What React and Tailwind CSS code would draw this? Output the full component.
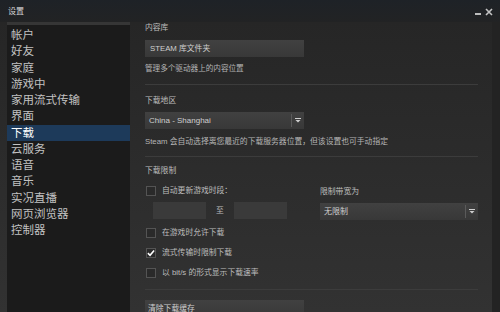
import React from "react"

const navItems = [
    "帐户",
    "好友",
    "家庭",
    "游戏中",
    "家用流式传输",
    "界面",
    "下载",
    "云服务",
    "语音",
    "音乐",
    "实况直播",
    "网页浏览器",
    "控制器",
]

const Arrow = () => (
    <svg width="6" height="5" viewBox="0 0 6 5" className="block">
        <rect x="0" y="0" width="6" height="1" fill="#cfcfcf" />
        <path d="M0.5 2 L5.5 2 L3 4.5 Z" fill="#cfcfcf" />
    </svg>
)

const Dropdown = ({ label, width }) => (
    <div className={`flex h-[17px] ${width} items-center bg-gradient-to-b from-[#414141] to-[#383838]`}>
        <span className="flex-1 pl-[4px] text-[8px] leading-[12px] text-[#cfcfcf]">{label}</span>
        <div className="h-[13px] w-px bg-[#5a5a5a]" />
        <div className="flex w-[12px] justify-center">
            <Arrow />
        </div>
    </div>
)

const Checkbox = ({ checked, label }) => (
    <div className="flex h-[12px] items-center gap-[6px] pl-[1px]">
        <div className="flex h-[10px] w-[10px] items-center justify-center border border-[#545454] bg-[#2a2a2a]">
            {checked && (
                <svg width="9" height="8" viewBox="0 0 9 8">
                    <path d="M1 4.2 L3.4 6.5 L8 1.2" stroke="#ffffff" strokeWidth="1.8" fill="none" />
                </svg>
            )}
        </div>
        <span className="text-[7.8px] leading-[12px] text-[#bdbdbd]">{label}</span>
    </div>
)

const Divider = ({ className }) => <div className={`h-px w-full shrink-0 bg-[#3c3c3c] ${className}`} />

const App = () => {
    return (
        <div
            className="flex h-[312px] w-[500px] flex-col overflow-hidden bg-[#262626]"
            style={{ fontFamily: '"Liberation Sans", "Noto Sans CJK SC", sans-serif' }}
        >
            {/* Title bar */}
            <div className="flex h-[22px] shrink-0 items-center justify-between bg-gradient-to-b from-[#1e2227] to-[#222324] pl-[8px] pr-[7px] pt-[2px]">
                <span className="text-[8px] leading-[12px] text-[#d6d6d6]">设置</span>
                <div className="flex items-center gap-[4px]">
                    <div className="mt-[4px] h-[2px] w-[6px] bg-[#bdbdbd]" />
                    <svg width="8" height="8" viewBox="0 0 8 8">
                        <path d="M1 1 L7 7 M7 1 L1 7" stroke="#c4c4c4" strokeWidth="1.6" />
                    </svg>
                </div>
            </div>

            <div className="flex min-h-0 flex-1 overflow-hidden bg-gradient-to-b from-[#262626] to-[#323232]">
                {/* Left nav */}
                <div className="ml-[7px] w-[123px] shrink-0 border-t-[3px] border-[#363636] bg-[#1b1b1b]">
                    <div className="pt-[2px]">
                        {navItems.map((item) => (
                            <div
                                key={item}
                                className={`flex h-[16.25px] items-center pl-[4px] text-[11.5px] leading-[14px] ${
                                    item === "下载" ? "bg-[#1d3a5a] text-white" : "text-[#c2c2c2]"
                                }`}
                            >
                                {item}
                            </div>
                        ))}
                    </div>
                </div>

                {/* Content */}
                <div className="flex flex-1 flex-col pl-[15px] pr-[14px]">
                    <span className="h-[12px] shrink-0 text-[7.8px] leading-[12px] text-[#bdbdbd]">内容库</span>
                    <div className="mt-[6px] flex h-[17px] w-[159px] shrink-0 items-center bg-gradient-to-b from-[#414141] to-[#383838] pl-[5px] text-[7.8px] leading-[12px] text-[#cfcfcf]">
                        STEAM 库文件夹
                    </div>
                    <span className="mt-[6px] h-[12px] shrink-0 text-[7.6px] leading-[12px] text-[#b5b5b5]">管理多个驱动器上的内容位置</span>
                    <Divider className="mt-[9px]" />

                    <span className="mt-[10px] h-[12px] shrink-0 text-[7.8px] leading-[12px] text-[#bdbdbd]">下载地区</span>
                    <div className="mt-[5px] shrink-0">
                        <Dropdown label="China - Shanghai" width="w-[159px]" />
                    </div>
                    <span className="mt-[7px] h-[12px] shrink-0 text-[7.8px] leading-[12px] text-[#b5b5b5]">
                        Steam 会自动选择离您最近的下载服务器位置，但该设置也可手动指定
                    </span>
                    <Divider className="mt-[8px]" />

                    <span className="mt-[8px] h-[12px] shrink-0 text-[7.8px] leading-[12px] text-[#bdbdbd]">下载限制</span>
                    <div className="mt-[8px] flex shrink-0">
                        <div className="w-[175px]">
                            <Checkbox label="自动更新游戏时段：" />
                            <div className="mt-[5px] flex items-center pl-[8px]">
                                <div className="h-[17px] w-[53px] bg-[#3a3a3a]" />
                                <span className="w-[28px] text-center text-[7.8px] leading-[12px] text-[#bdbdbd]">至</span>
                                <div className="h-[17px] w-[53px] bg-[#3a3a3a]" />
                            </div>
                        </div>
                        <div className="flex flex-1 flex-col">
                            <span className="mt-px h-[12px] text-[7.8px] leading-[12px] text-[#bdbdbd]">限制带宽为</span>
                            <div className="mt-[5px]">
                                <Dropdown label="无限制" width="w-full" />
                            </div>
                        </div>
                    </div>

                    <div className="mt-[7px] flex shrink-0 flex-col gap-[8px]">
                        <Checkbox label="在游戏时允许下载" />
                        <Checkbox checked label="流式传输时限制下载" />
                        <Checkbox label="以 bit/s 的形式显示下载速率" />
                    </div>
                    <Divider className="mt-[10px]" />

                    <div className="mt-[10px] flex h-[17px] w-[159px] shrink-0 items-center bg-gradient-to-b from-[#414141] to-[#383838] pl-[3px] text-[7.8px] leading-[12px] text-[#cfcfcf]">
                        清除下载缓存
                    </div>
                </div>

                {/* Right edge */}
                <div className="w-[8px] shrink-0 bg-[#232323]" />
            </div>
        </div>
    )
}

export default App
